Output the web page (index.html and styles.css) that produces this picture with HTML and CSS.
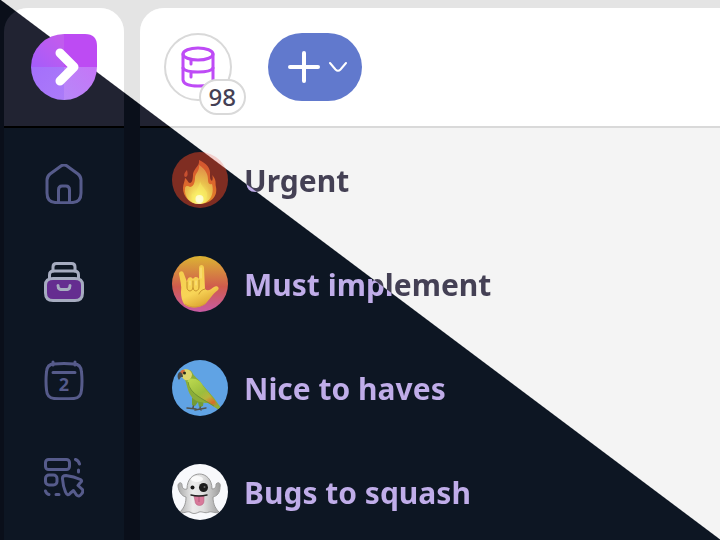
FILE: index.html
```html
<!DOCTYPE html>
<html lang="en">
<head>
    <meta charset="UTF-8">
    <meta name="viewport" content="width=device-width, initial-scale=1.0">
    <title>Collections</title>
    <link rel="stylesheet" href="styles.css">
</head>
<body>
    <div class="app">
        <nav class="sidebar panel" aria-label="Main">
            <div class="panel-header sidebar-header">
                <a href="#" class="logo" aria-label="Start">
                    <svg width="66" height="66" viewBox="0 0 66 66">
                        <defs>
                            <clipPath id="drop"><path d="M33 0H54Q66 0 66 12V33A33 33 0 1 1 33 0Z"/></clipPath>
                            <linearGradient id="q1" x1="1" y1="0" x2="0" y2="1"><stop offset="0.2" stop-color="#c05cee"/><stop offset="1" stop-color="#a45cfb"/></linearGradient>
                            <linearGradient id="q3" x1="0" y1="0" x2="1" y2="1"><stop offset="0" stop-color="#a46ffb"/><stop offset="1" stop-color="#ab7bf8"/></linearGradient>
                            <linearGradient id="q4" x1="0" y1="1" x2="1" y2="0"><stop offset="0" stop-color="#b788f8"/><stop offset="1" stop-color="#c575f7"/></linearGradient>
                        </defs>
                        <g clip-path="url(#drop)">
                            <rect width="33" height="33" fill="url(#q1)"/>
                            <rect x="33" width="33" height="33" fill="#bd4bf3"/>
                            <rect y="33" width="33" height="33" fill="url(#q3)"/>
                            <rect x="33" y="33" width="33" height="33" fill="url(#q4)"/>
                        </g>
                        <path d="M29 19L43 33L29 47" fill="none" stroke="#fff" stroke-width="9" stroke-linecap="round" stroke-linejoin="round"/>
                    </svg>
                </a>
            </div>
            <hr class="divider">
            <ul class="nav-list">
                <li><a href="#" class="nav-link" aria-label="Home">
                    <svg width="40" height="40" viewBox="0 0 40 40">
                        <path d="M17 2Q20 0 23 2L34 10Q37 12.500 37 16V29Q37 38 29 38.500Q20 39 11 38.500Q3 38 3 29V16Q3 12.500 6 10Z"/>
                        <path d="M14.500 38V26Q14.500 22 18 22H22Q25.500 22 25.500 26V38"/>
                    </svg>
                </a></li>
                <li><a href="#" class="nav-link active" aria-label="Collections" aria-current="page">
                    <svg width="40" height="40" viewBox="0 0 40 40">
                        <path d="M9 9V5Q9 1.500 12.500 1.500H27.500Q31 1.500 31 5V9"/>
                        <path d="M5.500 17V13Q5.500 9 9.500 9H30.500Q34.500 9 34.500 13V17"/>
                        <path class="drawer" d="M9 16.500H31Q38.500 16.500 38.500 23V31Q38.500 38.500 31 38.500H9Q1.500 38.500 1.500 31V23Q1.500 16.500 9 16.500Z"/>
                        <path d="M14 23.500C14 28 17 27.500 20 27.500S26 28 26 23.500"/>
                    </svg>
                </a></li>
                <li><a href="#" class="nav-link" aria-label="Calendar">
                    <svg width="40" height="40" viewBox="0 0 40 40">
                        <path d="M10 4Q20 3 30 4Q37 4 37.500 12Q38.500 21 37.500 30Q37 38 30 38.500Q20 39 10 38.500Q3 38 2.500 30Q1.500 21 2.500 12Q3 4 10 4Z"/>
                        <path d="M9 2V5M31 2V5M9 12.500H31"/>
                        <text class="day" x="20" y="31" text-anchor="middle">2</text>
                    </svg>
                </a></li>
                <li><a href="#" class="nav-link" aria-label="Select blocks">
                    <svg width="40" height="40" viewBox="0 0 40 40">
                        <rect x="1.500" y="1.500" width="24" height="10" rx="3"/>
                        <rect x="1.500" y="17" width="11.500" height="10" rx="3.500"/>
                        <path d="M31.500 1.500Q34.500 2.500 35.500 6M34.500 12V14M1.500 33Q2.500 36 5 36.500M12 36.500H15"/>
                        <path d="M18.500 21Q18 17.500 22 17.500Q30 18.500 36.500 21.500Q39 23 36 25L34 27.500L38.500 31.500Q39.500 34 37.500 36Q35 39.500 32.500 37L29.500 32.500L26.500 35Q23.500 39 21.500 34Q19 28 18.500 21Z"/>
                    </svg>
                </a></li>
            </ul>
        </nav>

        <main class="content panel">
            <header class="panel-header toolbar">
                <button type="button" class="storage-btn" aria-label="Storage, 98 items">
                    <svg width="34" height="42" viewBox="0 0 34 42">
                        <ellipse cx="17" cy="8" rx="15" ry="6"/>
                        <path d="M2 8V34Q3 40 17 40T32 34V8"/>
                        <path d="M2 22Q4 26 17 26T32 22M10 14V18M10 27V31"/>
                    </svg>
                    <span class="badge">98</span>
                </button>
                <button type="button" class="add-btn" aria-label="Add">
                    <svg width="32" height="32" viewBox="0 0 32 32" stroke-width="4"><path d="M16 2V30M2 16H30"/></svg>
                    <svg width="20" height="12" viewBox="0 0 20 12" stroke-width="2"><path d="M2 2L7.500 8.500Q10 11 12.500 8.500L18 2"/></svg>
                </button>
            </header>
            <hr class="divider">
            <ul class="collections">
                <li><a href="#" class="collection">
                    <span class="avatar urgent">
                        <svg width="56" height="56" viewBox="0 0 56 56">
                            <defs>
                                <linearGradient id="flame" x1="0" y1="0" x2="0" y2="1"><stop offset="0" stop-color="#d4552f"/><stop offset="0.600" stop-color="#dd6a2c"/><stop offset="1" stop-color="#e58a28"/></linearGradient>
                                <radialGradient id="core" cx="0.500" cy="0.900" r="0.850"><stop offset="0" stop-color="#ffffd8"/><stop offset="0.200" stop-color="#fbf06b"/><stop offset="0.550" stop-color="#e9c04c"/><stop offset="1" stop-color="#e08d48"/></radialGradient>
                            </defs>
                            <path fill="url(#flame)" d="M27 8C34 11 39 16 38 23C38 26 38 28 40 29C41 27 41 25 40 23C45 28 43 31 44 35C46 45 38 52 27 52C17 52 11 44 11 36C11 32 13 29 13 26C16 28 16 31 18 31C20 31 21 27 21 22C22 16 28 14 27 8Z"/>
                            <path fill="#c84f30" d="M15 18C16 22 16 25 13 25C11 23 13 20 15 18Z"/>
                            <path fill="url(#core)" d="M27 13C34 18 36 22 36 28C36 32 38 33 40 32C43 43 37 52 27 52C18 52 12 45 13 36C14 33 16 34 18 35C21 35 23 31 23 26C23 21 28 19 27 13Z"/>
                            <path fill="#f8eb62" opacity="0.500" d="M28 29C29 34 34 37 35 41C36 48 32 51 27 51C22 51 18 47 20 41C21 43 23 43 24 40C25 36 28 33 28 29Z"/>
                            <ellipse cx="27.500" cy="47" rx="4" ry="4" fill="#fffff0" opacity="0.700"/>
                        </svg>
                    </span>
                    <span class="label">Urgent</span>
                </a></li>
                <li><a href="#" class="collection">
                    <span class="avatar must">
                        <svg width="56" height="56" viewBox="0 0 56 56">
                            <defs>
                                <linearGradient id="skin" x1="0" y1="0" x2="0.400" y2="1"><stop offset="0" stop-color="#f3cd4c"/><stop offset="0.700" stop-color="#f8d557"/><stop offset="1" stop-color="#e0ab37"/></linearGradient>
                            </defs>
                            <path fill="url(#skin)" d="M7 18C7 15 11 14 12 18L15 26C15 21 19 20 21 23C23 20 26 21 27 23V12C27 8 32 8 32 12L33 33C36 36 39 33 42 31C45 29 48 32 46 34C40 38 37 45 33 48C26 53 17 52 13 49C10 46 9 40 9 36C10 30 8 24 7 18Z"/>
                            <path fill="none" stroke="#c18c2a" stroke-width="1" stroke-linecap="round" d="M15 26V31C15 36 20 36 21 32V25M21 32C22 37 27 35 27 31V24M33 33C29 34 28 36 27 38"/>
                            <path fill="none" stroke="#fbe487" stroke-width="1" stroke-linecap="round" d="M29 12V22M18 25V29M24 25V29"/>
                            <path fill="none" stroke="#d69d37" stroke-width="1" d="M13 48C18 52 28 52 34 47"/>
                        </svg>
                    </span>
                    <span class="label">Must implement</span>
                </a></li>
                <li><a href="#" class="collection">
                    <span class="avatar nice">
                        <svg width="56" height="56" viewBox="0 0 56 56">
                            <defs>
                                <linearGradient id="plumage" x1="0.200" y1="0" x2="0.850" y2="1"><stop offset="0" stop-color="#b8d64d"/><stop offset="0.450" stop-color="#9bbd3d"/><stop offset="0.650" stop-color="#b7b53b"/><stop offset="0.850" stop-color="#d76c28"/><stop offset="1" stop-color="#8caf3e"/></linearGradient>
                            </defs>
                            <path fill="none" stroke="#52534d" stroke-width="1.500" stroke-linecap="round" d="M22 43L21 48M15 48L24 49M30 43L28 48M23 50L34 48M28 48L29 50"/>
                            <path fill="#729b35" d="M20 38L20 45L23 46L26 42L27 47L31 46L32 39Z"/>
                            <path fill="#8bad38" d="M8 15C9 9 17 8 20 12C22 17 27 19 29 23L42 38L49 48L47 50L36 43C29 43 22 41 19 36C15 30 15 24 13 20Z"/>
                            <path fill="url(#plumage)" d="M16 19C23 17 29 21 31 26L43 41L47 48C41 46 33 40 26 36C19 32 14 25 16 19Z"/>
                            <path fill="none" stroke="#6f9232" stroke-width="1" d="M16 22C17 34 33 40 42 46"/>
                            <path fill="#ddd66e" d="M9 11C13 8 19 9 20 14C20 18 17 21 13 20C10 18 8 15 9 11Z"/>
                            <path fill="#d66d3f" d="M8 13Q9 9 13 10L11 14Z"/>
                            <path fill="#4b4c48" d="M8 12C5 13 5 18 7 20L9 17L11 17Q11 13 8 12Z"/>
                            <circle cx="12.500" cy="13" r="1.500" fill="#27291f"/>
                        </svg>
                    </span>
                    <span class="label">Nice to haves</span>
                </a></li>
                <li><a href="#" class="collection">
                    <span class="avatar bugs">
                        <svg width="56" height="56" viewBox="0 0 56 56">
                            <defs>
                                <linearGradient id="sheet"><stop offset="0" stop-color="#a9a9a9"/><stop offset="0.350" stop-color="#ececec"/><stop offset="0.600" stop-color="#dedede"/><stop offset="1" stop-color="#9d9d9d"/></linearGradient>
                            </defs>
                            <path fill="url(#sheet)" stroke="#9a9a9a" stroke-width="1" d="M15 25C15 5 40 5 40 25C44 25 44 22 44 20C47 17 49 20 48 23C48 29 45 32 41 33C41 41 44 45 47 48C43 50 40 47 37 48C33 50 30 47 27 48C23 50 21 50 18 48C14 47 12 50 8 48C13 43 14 38 14 33C9 32 6 26 6 21C7 18 10 18 10 21C10 24 12 26 15 25Z"/>
                            <ellipse cx="25" cy="15" rx="6" ry="3" fill="#fff" opacity="0.800"/>
                            <circle cx="20.500" cy="23.500" r="2" fill="#171717"/>
                            <circle cx="31.500" cy="23.500" r="4.500" fill="#1b1b1b"/>
                            <circle cx="32.500" cy="23" r="1" fill="#666"/>
                            <path fill="#d8799a" stroke="#b65b7d" stroke-width="0.500" d="M22 32H32V37C32 43 23 43 23 37Z"/>
                            <path fill="none" stroke="#242424" stroke-width="1.500" stroke-linecap="round" d="M19 31Q27 33 35 31"/>
                            <path fill="none" stroke="#a84f70" stroke-width="0.700" d="M27 33V38"/>
                        </svg>
                    </span>
                    <span class="label">Bugs to squash</span>
                </a></li>
            </ul>
        </main>
    </div>
</body>
</html>
```

FILE: styles.css
```css
/* every surface shares one window-sized diagonal: dark below, light above */
:root {
    --edge: calc(50% + 1px);
    --page: linear-gradient(to top right, #0a0f1a 50%, #e4e4e4 var(--edge));
    --surface: linear-gradient(to top right, #0d1623 50%, #f4f4f4 var(--edge));
    --header: linear-gradient(to top right, #212332 50%, #ffffff var(--edge));
    --line: linear-gradient(to top right, #000000 50%, #d9d9d9 var(--edge));
    --text: linear-gradient(to top right, #c0ade9 50%, #444054 var(--edge));
    --urgent: linear-gradient(to top right, #7f2d22 50%, #f3cecb var(--edge));
    --icon: #565b8b;
    --icon-active: #a6acc0;
    --accent: #be4bf6;
    --button: #6179cd;
    --badge-text: #444054;
}
* {
    margin: 0;
    padding: 0;
    box-sizing: border-box;
}
body {
    font-family: "Noto Sans", sans-serif;
    background: var(--page) fixed;
}
ul {
    list-style: none;
}
a {
    text-decoration: none;
}
svg {
    display: block;
}
.app {
    display: grid;
    grid-template-columns: 120px 1fr;
    gap: 16px;
    min-height: 100vh;
    padding: 8px 0 0 4px;
}
.panel {
    background: var(--surface) fixed;
    border-radius: 24px 24px 0 0;
}
.content {
    border-top-right-radius: 0;
}
.panel-header {
    display: flex;
    align-items: center;
    height: 118px;
    background: var(--header) fixed;
    border-radius: inherit;
}
.divider {
    height: 2px;
    border: none;
    background: var(--line) fixed;
}

/* sidebar */
.sidebar-header {
    justify-content: center;
}
.nav-list {
    display: flex;
    flex-direction: column;
    align-items: center;
    gap: 58px;
    padding: 36px 0 16px;
}
.nav-link svg {
    fill: none;
    stroke: var(--icon);
    stroke-width: 3;
    stroke-linecap: round;
    stroke-linejoin: round;
}
.nav-link.active svg {
    stroke: var(--icon-active);
}
.nav-link .drawer {
    fill: #652d90;
}
.nav-link .day {
    fill: var(--icon);
    stroke: none;
    font-size: 18px;
    font-weight: 700;
}

/* toolbar */
.toolbar {
    gap: 36px;
    padding: 0 24px;
}
button {
    font-family: inherit;
    cursor: pointer;
}
.storage-btn {
    position: relative;
    display: flex;
    justify-content: center;
    align-items: center;
    width: 68px;
    height: 68px;
    background: #fff;
    border: 2px solid #d9d9d9;
    border-radius: 50%;
}
.storage-btn svg {
    fill: none;
    stroke: var(--accent);
    stroke-width: 3;
    stroke-linecap: round;
}
.badge {
    position: absolute;
    right: -16px;
    bottom: -16px;
    padding: 0 8px;
    background: #fff;
    border: 2px solid #d9d9d9;
    border-radius: 18px;
    color: var(--badge-text);
    font-size: 24px;
    font-weight: 500;
    line-height: 32px;
}
.add-btn {
    display: flex;
    justify-content: center;
    align-items: center;
    gap: 8px;
    height: 68px;
    padding: 0 14px 0 20px;
    background: var(--button);
    border: none;
    border-radius: 34px;
}
.add-btn svg {
    fill: none;
    stroke: #fff;
    stroke-linecap: round;
}

/* collections */
.collections {
    display: flex;
    flex-direction: column;
    gap: 48px;
    padding: 24px 32px 16px;
}
.collection {
    display: flex;
    align-items: center;
    gap: 16px;
}
.avatar {
    flex: none;
    border-radius: 50%;
    overflow: hidden;
}
.urgent {
    background: var(--urgent) fixed;
}
.must {
    background: linear-gradient(#dcb433, #d05b4d 55%, #c85ba4);
}
.nice {
    background: #60a3e4;
}
.bugs {
    background: #f8f9fc;
}
.label {
    padding-top: 2px;
    background: var(--text) fixed;
    -webkit-background-clip: text;
    background-clip: text;
    color: transparent;
    font-size: 30px;
    font-weight: 700;
    line-height: 40px;
}
```
